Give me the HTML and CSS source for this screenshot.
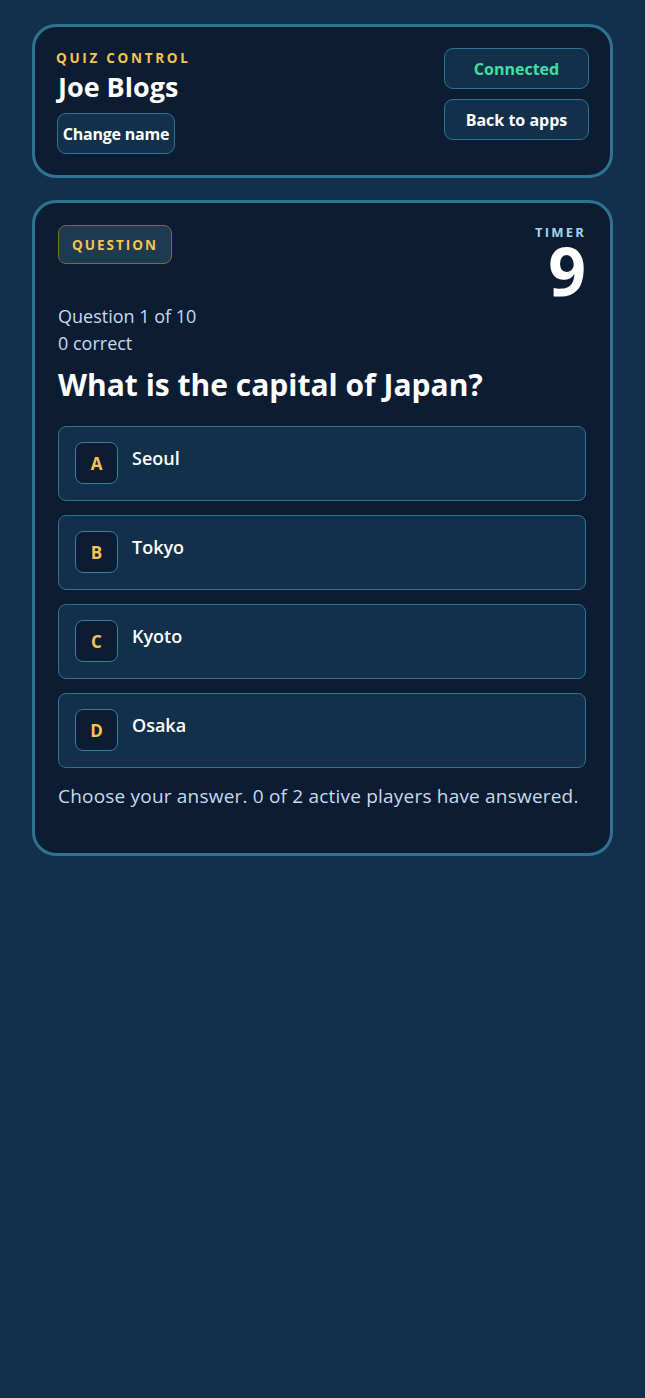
FILE: index.html
```html
<!DOCTYPE html>
<html lang="en">
<head>
<meta charset="utf-8">
<title>Quiz Control</title>
<link rel="stylesheet" href="styles.css">
</head>
<body>
<main class="page">
  <section class="card header-card">
    <div class="header-left">
      <div class="eyebrow">QUIZ CONTROL</div>
      <h1 class="player-name">Joe Blogs</h1>
      <button class="btn btn-small">Change name</button>
    </div>
    <div class="header-right">
      <button class="btn btn-wide btn-status">Connected</button>
      <button class="btn btn-wide">Back to apps</button>
    </div>
  </section>

  <section class="card question-card">
    <div class="question-top">
      <span class="badge">QUESTION</span>
      <div class="timer">
        <div class="timer-label">TIMER</div>
        <div class="timer-value">9</div>
      </div>
    </div>
    <div class="meta">
      <div>Question 1 of 10</div>
      <div>0 correct</div>
    </div>
    <h2 class="question">What is the capital of Japan?</h2>
    <div class="options">
      <div class="option"><span class="letter">A</span><span class="answer">Seoul</span></div>
      <div class="option"><span class="letter">B</span><span class="answer">Tokyo</span></div>
      <div class="option"><span class="letter">C</span><span class="answer">Kyoto</span></div>
      <div class="option"><span class="letter">D</span><span class="answer">Osaka</span></div>
    </div>
    <p class="status">Choose your answer. 0 of 2 active players have answered.</p>
  </section>
</main>
</body>
</html>
```

FILE: styles.css
```css
* { box-sizing: border-box; }

html, body {
  margin: 0;
  padding: 0;
  background: #13304b;
  min-height: 100%;
}

body {
  font-family: "Open Sans", "Noto Sans", "DejaVu Sans", sans-serif;
  color: #ffffff;
}

.page {
  padding: 24px 32px;
  display: flex;
  flex-direction: column;
  gap: 22px;
}

.card {
  background: #0c1c33;
  border: 3px solid #2f7393;
  border-radius: 24px;
}

.header-card {
  display: flex;
  justify-content: space-between;
  align-items: flex-start;
  padding: 21px;
  height: 154px;
}

.header-left {
  display: flex;
  flex-direction: column;
  align-items: flex-start;
}

.eyebrow {
  font-size: 13.5px;
  font-weight: 700;
  letter-spacing: 2.7px;
  color: #f5c453;
  line-height: 16px;
  margin-top: 2px;
}

.player-name {
  margin: 4px 0 0 2px;
  font-size: 27px;
  font-weight: 700;
  line-height: 34px;
}

.btn {
  font-family: inherit;
  font-weight: 700;
  font-size: 16px;
  color: #ffffff;
  background: #13304b;
  border: 1.5px solid #2f7393;
  border-radius: 9px;
  height: 41px;
  cursor: pointer;
}

.btn-small {
  margin-top: 9px;
  margin-left: 1px;
  padding: 0 2px;
  width: 118px;
  letter-spacing: -0.2px;
}

.header-right {
  display: flex;
  flex-direction: column;
  gap: 10px;
}

.btn-wide {
  width: 145px;
}

.btn-status {
  color: #3fe0a0;
}

.question-card {
  padding: 22px 24px 21px 22px;
}

.question-top {
  display: flex;
  justify-content: space-between;
  align-items: flex-start;
  height: 73px;
}

.badge {
  display: inline-flex;
  align-items: center;
  justify-content: center;
  margin-left: 1px;
  width: 114px;
  height: 39px;
  border: 1.5px solid #7f6b35;
  border-radius: 8px;
  background: #1d3a50;
  color: #f5c453;
  font-size: 13.5px;
  font-weight: 700;
  letter-spacing: 2px;
}

.timer {
  display: flex;
  flex-direction: column;
  align-items: flex-end;
}

.timer-label {
  font-size: 13px;
  font-weight: 700;
  letter-spacing: 2.2px;
  margin-right: 0;
  color: #a6d4ee;
  line-height: 14px;
}

.timer-value {
  font-size: 66px;
  font-weight: 700;
  line-height: 50px;
  margin-top: 6px;
}

.meta {
  margin-top: 5px;
  margin-left: 1px;
  font-size: 18px;
  line-height: 27px;
  color: #c4dcee;
}

.question {
  margin: 8px 0 0 1px;
  font-size: 30px;
  font-weight: 700;
  line-height: 40px;
}

.options {
  margin-top: 21px;
  margin-left: 1px;
  display: flex;
  flex-direction: column;
  gap: 14px;
}

.option {
  display: flex;
  align-items: flex-start;
  gap: 14px;
  background: #13304b;
  border: 1.5px solid #2f7393;
  border-radius: 8px;
  padding: 15px 16px;
  min-height: 75px;
}

.letter {
  flex: none;
  display: flex;
  align-items: center;
  justify-content: center;
  width: 43px;
  height: 42px;
  background: #0c1c33;
  border: 1.5px solid #3a7c9c;
  border-radius: 8px;
  color: #f5c453;
  font-weight: 700;
  font-size: 17px;
}

.answer {
  font-size: 18px;
  font-weight: 600;
  line-height: 32px;
}

.status {
  margin: 16px 0 0 1px;
  font-size: 19px;
  line-height: 24px;
  color: #c4dcee;
  padding-bottom: 24px;
  letter-spacing: 0.2px;
}
```
